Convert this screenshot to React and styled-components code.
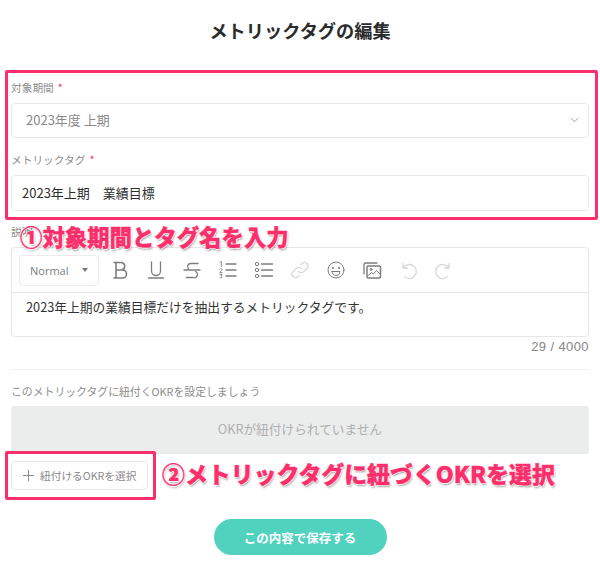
import styled, { createGlobalStyle } from 'styled-components';

const GlobalStyle = createGlobalStyle`
  html, body {
    margin: 0;
    padding: 0;
    background: #fff;
    font-family: "Noto Sans CJK JP", "Noto Sans", sans-serif;
  }
`;

const Page = styled.div`
  position: relative;
  width: 600px;
  height: 568px;
  overflow: hidden;
  padding: 0 11px;
  box-sizing: border-box;
`;

const Title = styled.h1`
  margin: 0;
  height: 62px;
  padding-top: 17px;
  box-sizing: border-box;
  font-size: 18.2px;
  line-height: 27px;
  font-weight: 700;
  color: #2b2b2b;
  text-align: center;
`;

const Highlight = styled.div`
  position: absolute;
  box-sizing: border-box;
  border: 3px solid #fb2f6b;
  border-radius: 2px;
  left: ${p => p.$left}px;
  top: ${p => p.$top}px;
  width: ${p => p.$width}px;
  height: ${p => p.$height}px;
`;

const Annotation = styled.div`
  position: absolute;
  left: ${p => p.$left}px;
  top: ${p => p.$top}px;
  font-size: ${p => p.$size}px;
  line-height: 28px;
  font-weight: 900;
  white-space: nowrap;
  color: #fb2f6b;
  -webkit-text-stroke: 0.4px #fb2f6b;
  text-shadow: -1px 0 0 #fff, 1px 0 0 #fff, 0 -1px 0 #fff, 0 1px 0 #fff, 1px 2px 2px rgba(0, 0, 0, 0.35);
`;

const Label = styled.div`
  height: 18px;
  margin-top: ${p => p.$top || 0}px;
  font-size: 10.7px;
  line-height: 18px;
  color: #8c8c8c;
  span { color: #fb2f6b; margin-left: 4px; }
`;

const Field = styled.div`
  display: flex;
  align-items: center;
  justify-content: space-between;
  box-sizing: border-box;
  height: ${p => p.$height}px;
  margin-top: 6px;
  padding: 0 9px 2px ${p => (p.$select ? 14 : 10)}px;
  border: 1px solid #e9e9e9;
  border-radius: 4px;
  font-size: 13px;
  color: ${p => (p.$select ? '#8a8a8a' : '#2e2e2e')};
`;

const Editor = styled.div`
  box-sizing: border-box;
  height: 90px;
  margin-top: 6px;
  border: 1px solid #e6e6e6;
  border-radius: 4px;
`;

const Toolbar = styled.div`
  display: flex;
  align-items: center;
  height: 45px;
  padding: 0 7px;
  box-sizing: border-box;
  border-bottom: 1px solid #e6e6e6;
`;

const StyleSelect = styled.div`
  display: flex;
  align-items: center;
  justify-content: space-between;
  box-sizing: border-box;
  width: 80px;
  height: 31px;
  margin-right: 3px;
  padding: 0 10px 0 10px;
  border: 1px solid #ececec;
  border-radius: 4px;
  font-family: "Open Sans", sans-serif;
  font-size: 11px;
  color: #7d7d7d;
`;

const Caret = styled.i`
  width: 0;
  height: 0;
  border-left: 3.5px solid transparent;
  border-right: 3.5px solid transparent;
  border-top: 4px solid #777;
`;

const ToolButton = styled.div`
  display: flex;
  align-items: center;
  justify-content: center;
  width: 36px;
  height: 28px;
  color: ${p => (p.$off ? '#d8d8d8' : '#7d7d7d')};
  svg { display: block; }
`;

const EditorText = styled.div`
  padding: 4px 14px;
  font-size: 12.75px;
  line-height: 20px;
  color: #333;
`;

const Counter = styled.div`
  height: 19px;
  font-family: "Liberation Sans", sans-serif;
  font-size: 13px;
  letter-spacing: 0.4px;
  line-height: 20px;
  color: #868686;
  text-align: right;
`;

const Divider = styled.hr`
  margin: 13px 0 0;
  border: 0;
  border-top: 1px solid #efefef;
`;

const SectionText = styled.div`
  margin-top: 12px;
  height: 18px;
  font-size: 10.85px;
  line-height: 18px;
  color: #8c8c8c;
`;

const EmptyBox = styled.div`
  display: flex;
  align-items: center;
  justify-content: center;
  height: 48px;
  margin-top: 6px;
  padding-bottom: 3px;
  box-sizing: border-box;
  border-radius: 3px;
  background: #ebecec;
  font-size: 12.7px;
  color: #b0b0b0;
`;

const AddButton = styled.div`
  display: flex;
  align-items: center;
  gap: 6px;
  box-sizing: border-box;
  width: 137px;
  height: 29px;
  margin-top: 7px;
  padding-left: 11px;
  border: 1px solid #e6e6e6;
  border-radius: 4px;
  font-size: 10.7px;
  color: #8a8a8a;
`;

const SaveRow = styled.div`
  display: flex;
  justify-content: center;
  margin-top: 29px;
`;

const SaveButton = styled.div`
  display: flex;
  align-items: center;
  justify-content: center;
  width: 173px;
  height: 36px;
  border-radius: 18px;
  background: #50d2bf;
  color: #fff;
  font-size: 12.5px;
  font-weight: 700;
`;

const Icon = ({ children, size = 22 }) => (
  <svg width={size} height={size} viewBox="0 0 22 22" fill="none" stroke="currentColor" strokeWidth="1.3" strokeLinecap="round" strokeLinejoin="round">
    {children}
  </svg>
);

function App() {
  return (
    <Page>
      <GlobalStyle />
      <Title>メトリックタグの編集</Title>

      <Label $top={17}>対象期間<span>*</span></Label>
      <Field $height={35} $select>
        2023年度 上期
        <svg width="9" height="6" viewBox="0 0 10 6" fill="none" stroke="#a0a0a0" strokeWidth="1.1">
          <path d="M1 1l4 4 4-4" />
        </svg>
      </Field>

      <Label $top={13}>メトリックタグ<span>*</span></Label>
      <Field $height={36}>2023年上期　業績目標</Field>

      <Label $top={12}>説明</Label>
      <Editor>
        <Toolbar>
          <StyleSelect>Normal<Caret /></StyleSelect>
          <ToolButton>
            <Icon><path d="M5 3.5h7.5a3.8 3.8 0 0 1 0 7.5H7m0 0h6.5a4 4 0 0 1 0 8H5M7 3.5V19" strokeWidth="1.6" /></Icon>
          </ToolButton>
          <ToolButton>
            <Icon><path d="M6.5 3v9a4.5 4.5 0 0 0 9 0V3M3.5 19h15" /></Icon>
          </ToolButton>
          <ToolButton>
            <Icon><path d="M17 4.5H9.5a3 3 0 0 0-2 5.2M3 11h16M14.5 12.5a3.2 3.2 0 0 1-2.5 6H5.5" /></Icon>
          </ToolButton>
          <ToolButton>
            <Icon>
              <path d="M9 5h10M9 11h10M9 17h10" />
              <path d="M3 3.2l1.3-.7v5M2.8 10.2a1.2 1.2 0 0 1 2.2.6c0 .9-2.2 1.8-2.2 2.9h2.4M3 15.5h2l-1 1.3a1.1 1.1 0 1 1-1.1 1.6" strokeWidth="0.9" />
            </Icon>
          </ToolButton>
          <ToolButton>
            <Icon>
              <path d="M8.5 5h11M8.5 11h11M8.5 17h11" />
              <circle cx="4" cy="5" r="1.7" strokeWidth="1" />
              <circle cx="4" cy="11" r="1.7" strokeWidth="1" />
              <circle cx="4" cy="17" r="1.7" strokeWidth="1" />
            </Icon>
          </ToolButton>
          <ToolButton $off>
            <Icon>
              <path d="M9.5 12.5a3.6 3.6 0 0 0 5.1.2l3.6-3.4a3.6 3.6 0 0 0-5-5.1l-1.4 1.3" />
              <path d="M12.5 9.5a3.6 3.6 0 0 0-5.1-.2l-3.6 3.4a3.6 3.6 0 0 0 5 5.1l1.4-1.3" />
            </Icon>
          </ToolButton>
          <ToolButton>
            <Icon>
              <circle cx="11" cy="11" r="8" strokeWidth="1" />
              <circle cx="8" cy="9" r="0.4" fill="currentColor" />
              <circle cx="14" cy="9" r="0.4" fill="currentColor" />
              <path d="M7 12.5h8a4 4 0 0 1-8 0z" strokeWidth="1" />
            </Icon>
          </ToolButton>
          <ToolButton>
            <Icon>
              <path d="M3 15V5.5A1.5 1.5 0 0 1 4.5 4H16" />
              <rect x="6" y="7" width="13.5" height="12" rx="1" strokeWidth="1.5" />
              <circle cx="10" cy="10.5" r="1" strokeWidth="1" />
              <path d="M6.5 17l4-3.5 2 1.5 3-3.5 4 4" strokeWidth="1" />
            </Icon>
          </ToolButton>
          <ToolButton $off>
            <Icon><path d="M6 4.5V9h4.5M6.3 9a7 7 0 1 1 1.2 8.6" /></Icon>
          </ToolButton>
          <ToolButton $off>
            <Icon><path d="M16 4.5V9h-4.5M15.7 9a7 7 0 1 0-1.2 8.6" /></Icon>
          </ToolButton>
        </Toolbar>
        <EditorText>2023年上期の業績目標だけを抽出するメトリックタグです。</EditorText>
      </Editor>
      <Counter>29 / 4000</Counter>
      <Divider />

      <SectionText>このメトリックタグに紐付くOKRを設定しましょう</SectionText>
      <EmptyBox>OKRが紐付けられていません</EmptyBox>
      <AddButton>
        <svg width="11" height="11" viewBox="0 0 11 11" stroke="#8a8a8a" strokeWidth="1"><path d="M5.5 0v11M0 5.5h11" /></svg>
        紐付けるOKRを選択
      </AddButton>
      <SaveRow><SaveButton>この内容で保存する</SaveButton></SaveRow>

      <Highlight $left={5} $top={70} $width={593} $height={150} />
      <Highlight $left={5} $top={451} $width={151} $height={49} />
      <Annotation $left={20} $top={222} $size={22.4}>①対象期間とタグ名を入力</Annotation>
      <Annotation $left={162} $top={459} $size={22.9}>②メトリックタグに紐づくOKRを選択</Annotation>
    </Page>
  );
}

export default App;
